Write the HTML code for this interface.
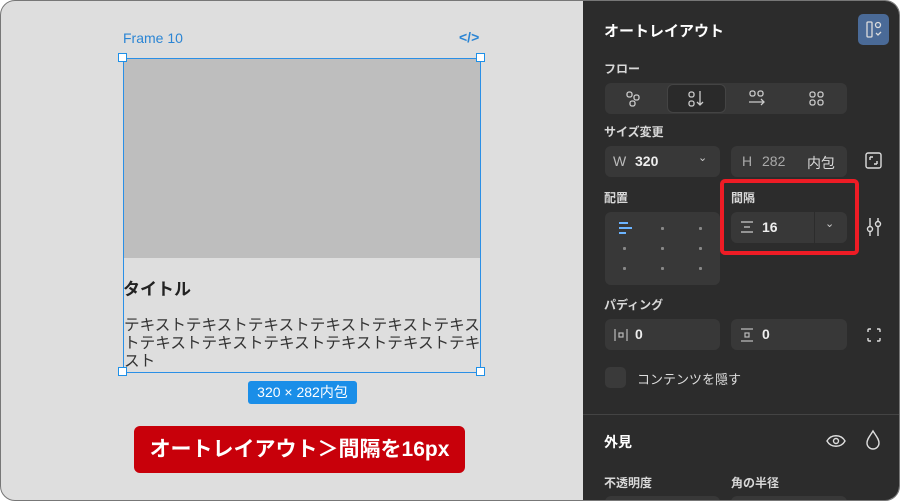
<!DOCTYPE html>
<html><head><meta charset="utf-8"><style>
*{margin:0;padding:0;box-sizing:border-box}
body{width:900px;height:501px;background:#fff;font-family:"Liberation Sans","Noto Sans CJK JP",sans-serif;overflow:hidden;position:relative}
.wrap{position:absolute;left:0;top:0;width:900px;height:501px;border:1px solid #777;border-radius:15px;overflow:hidden;background:#dedede}
.a{position:absolute}
.rp{position:absolute;left:582px;top:-1px;width:317px;height:501px;background:#2c2c2c}
.lbl{position:absolute;color:#d8d8d8;font-size:12px;font-weight:bold}
.fld{position:absolute;background:#383838;border-radius:6px}
.t{position:absolute;color:#eee;font-size:14px}
.h{position:absolute;width:9px;height:9px;background:#fff;border:1.5px solid #1e90e8}
.dot{position:absolute;width:3px;height:3px;background:#888;border-radius:1px}
</style></head><body><div class="wrap">
<div class="a" style="left:122px;top:29px;color:#2b85d4;font-size:14px">Frame 10</div>
<div class="a" style="left:458px;top:28px;color:#2b85d4;font-size:14px;font-weight:bold">&lt;/&gt;</div>
<div class="a" style="left:122px;top:57px;width:358px;height:315px;border:1.5px solid #2a8fe6"></div>
<div class="a" style="left:123px;top:58px;width:356px;height:199px;background:#bebebe"></div>
<div class="a" style="left:122px;top:274px;font-size:17px;font-weight:bold;color:#222">タイトル</div>
<div class="a" style="left:123px;top:316px;width:359px;font-size:15.6px;line-height:18px;color:#333;word-break:break-all">テキストテキストテキストテキストテキストテキストテキストテキストテキストテキストテキストテキスト</div>
<div class="h" style="left:117px;top:52px"></div><div class="h" style="left:475px;top:52px"></div>
<div class="h" style="left:117px;top:366px"></div><div class="h" style="left:475px;top:366px"></div>
<div class="a" style="left:247px;top:380px;width:109px;height:23px;background:#1a8ee8;border-radius:3px;color:#fff;font-size:14px;line-height:23px;text-align:center">320 × 282内包</div>
<div class="a" style="left:133px;top:425px;width:331px;height:47px;background:#c8000a;border-radius:6px;color:#fff;font-size:21px;font-weight:bold;line-height:47px;text-align:center">オートレイアウト＞間隔を16px</div>

<div class="rp">
<div class="a" style="left:21px;top:20px;color:#fff;font-size:15px;font-weight:bold">オートレイアウト</div>
<div class="a" style="left:275px;top:14px;width:31px;height:31px;background:#4a6a97;border-radius:5px"><svg width="31" height="31"><rect x="9" y="8" width="5" height="15" rx="1" fill="none" stroke="#ddd" stroke-width="1.3"/><circle cx="20" cy="11" r="2.5" fill="none" stroke="#ddd" stroke-width="1.3"/><path d="M18 19l2 2 3-3" fill="none" stroke="#ddd" stroke-width="1.3"/></svg></div>
<div class="lbl" style="left:21px;top:60px">フロー</div>
<div class="fld" style="left:22px;top:83px;width:242px;height:31px"></div>
<div class="a" style="left:84px;top:84px;width:59px;height:29px;background:#2a2a2a;border:1px solid #444;border-radius:6px"></div>
<svg class="a" style="left:22px;top:83px" width="242" height="31" fill="none" stroke="#ccc" stroke-width="1.3">
<rect x="22" y="9" width="5" height="5" rx="2"/><rect x="29" y="12" width="5" height="5" rx="2"/><rect x="25" y="18" width="5" height="5" rx="2"/>
<rect x="84" y="9" width="5" height="5" rx="2"/><rect x="84" y="18" width="5" height="5" rx="2"/><path d="M95 8v14M92 19l3 3 3-3"/>
<rect x="145" y="8" width="5" height="5" rx="2"/><rect x="153" y="8" width="5" height="5" rx="2"/><path d="M144 19h15M156 16l3 3-3 3"/>
<rect x="205" y="9" width="5" height="5" rx="2"/><rect x="213" y="9" width="5" height="5" rx="2"/><rect x="205" y="17" width="5" height="5" rx="2"/><rect x="213" y="17" width="5" height="5" rx="2"/>
</svg>
<div class="lbl" style="left:21px;top:123px">サイズ変更</div>
<div class="fld" style="left:22px;top:146px;width:115px;height:31px"></div>
<div class="t" style="left:30px;top:153px;color:#bbb">W</div><div class="t" style="left:52px;top:153px;font-weight:bold">320</div>
<div class="t" style="left:115px;top:151px;color:#ccc;font-size:11px">⌄</div>
<div class="fld" style="left:148px;top:146px;width:116px;height:31px"></div>
<div class="t" style="left:159px;top:153px;color:#aaa">H</div><div class="t" style="left:179px;top:153px;color:#aaa">282</div><div class="t" style="left:224px;top:153px;color:#ddd">内包</div>
<svg class="a" style="left:281px;top:151px" width="20" height="20" fill="none" stroke="#ddd" stroke-width="1.4"><rect x="2" y="2" width="15" height="15" rx="2"/><path d="M6 6h3M6 6v3M13 13h-3M13 13v-3"/></svg>
<div class="lbl" style="left:21px;top:189px">配置</div>
<div class="fld" style="left:22px;top:212px;width:115px;height:73px"></div>
<div class="a" style="left:36px;top:222px;width:9px;height:2px;background:#6cb4ff"></div>
<div class="a" style="left:36px;top:227px;width:13px;height:2px;background:#6cb4ff"></div>
<div class="a" style="left:36px;top:232px;width:7px;height:2px;background:#6cb4ff"></div>
<div class="dot" style="left:78px;top:227px"></div><div class="dot" style="left:116px;top:227px"></div>
<div class="dot" style="left:40px;top:247px"></div><div class="dot" style="left:78px;top:247px"></div><div class="dot" style="left:116px;top:247px"></div>
<div class="dot" style="left:40px;top:267px"></div><div class="dot" style="left:78px;top:267px"></div><div class="dot" style="left:116px;top:267px"></div>
<div class="a" style="left:137px;top:179px;width:139px;height:76px;border:4px solid #ee1c25;border-radius:5px"></div>
<div class="lbl" style="left:148px;top:189px">間隔</div>
<div class="fld" style="left:148px;top:212px;width:116px;height:31px"></div>
<div class="a" style="left:231px;top:212px;width:1px;height:31px;background:#2c2c2c"></div>
<svg class="a" style="left:156px;top:219px" width="16" height="16" fill="none" stroke="#ccc" stroke-width="1.2"><path d="M2 3h12M5 8h6M2 13h12"/></svg>
<div class="t" style="left:179px;top:219px;font-weight:bold">16</div>
<div class="t" style="left:242px;top:217px;color:#ccc;font-size:11px">⌄</div>
<svg class="a" style="left:281px;top:216px" width="20" height="22" fill="none" stroke="#ddd" stroke-width="1.4"><path d="M6 2v18M14 2v18"/><circle cx="6" cy="13" r="2.5" fill="#2c2c2c"/><circle cx="14" cy="8" r="2.5" fill="#2c2c2c"/></svg>
<div class="lbl" style="left:21px;top:296px">パディング</div>
<div class="fld" style="left:22px;top:319px;width:115px;height:31px"></div>
<svg class="a" style="left:30px;top:327px" width="16" height="16" fill="none" stroke="#bbb" stroke-width="1.2"><path d="M2 2v12M14 2v12"/><rect x="6" y="6" width="4" height="4"/></svg>
<div class="t" style="left:52px;top:326px;font-weight:bold">0</div>
<div class="fld" style="left:148px;top:319px;width:116px;height:31px"></div>
<svg class="a" style="left:156px;top:327px" width="16" height="16" fill="none" stroke="#bbb" stroke-width="1.2"><path d="M2 2h12M2 14h12"/><rect x="6" y="6" width="4" height="4"/></svg>
<div class="t" style="left:179px;top:326px;font-weight:bold">0</div>
<svg class="a" style="left:282px;top:326px" width="18" height="18" fill="none" stroke="#ddd" stroke-width="1.4"><path d="M3 6V4a1 1 0 0 1 1-1h2M12 3h2a1 1 0 0 1 1 1v2M15 12v2a1 1 0 0 1-1 1h-2M6 15H4a1 1 0 0 1-1-1v-2"/></svg>
<div class="a" style="left:22px;top:367px;width:21px;height:21px;background:#3a3a3a;border-radius:5px"></div>
<div class="a" style="left:54px;top:369px;color:#ddd;font-size:13px">コンテンツを隠す</div>
<div class="a" style="left:0;top:414px;width:317px;height:1px;background:#444"></div>
<div class="a" style="left:21px;top:432px;color:#fff;font-size:14px;font-weight:bold">外見</div>
<svg class="a" style="left:242px;top:430px" width="22" height="22" fill="none" stroke="#ddd" stroke-width="1.4"><path d="M2 11c4-7 14-7 18 0c-4 7-14 7-18 0z"/><circle cx="11" cy="11" r="2.5"/></svg>
<svg class="a" style="left:281px;top:429px" width="18" height="22" fill="none" stroke="#ddd" stroke-width="1.4"><path d="M9 2C6 7 3 10 3 14a6 6 0 0 0 12 0c0-4-3-7-6-12z"/></svg>
<div class="lbl" style="left:21px;top:474px">不透明度</div>
<div class="lbl" style="left:148px;top:474px">角の半径</div>
<div class="fld" style="left:22px;top:496px;width:115px;height:20px"></div>
<div class="fld" style="left:148px;top:496px;width:116px;height:20px"></div>
</div>
</div></body></html>
